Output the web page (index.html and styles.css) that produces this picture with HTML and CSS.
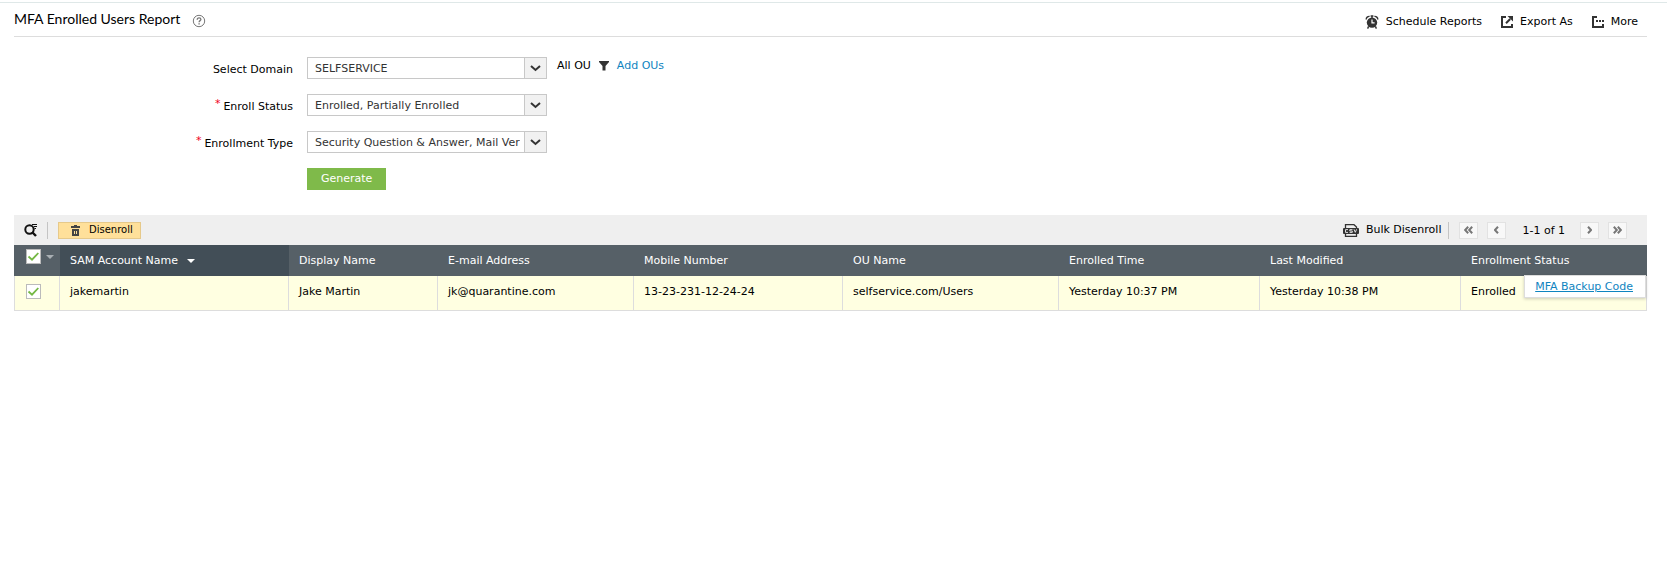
FILE: index.html
```html
<!DOCTYPE html>
<html lang="en">
<head>
<meta charset="utf-8">
<title>MFA Enrolled Users Report</title>
<link rel="stylesheet" href="styles.css">
</head>
<body>
<main class="page">
  <header class="page-header">
    <h1 class="title">MFA Enrolled Users Report</h1>
    <button class="plain help" type="button" aria-label="Help">
      <svg width="14" height="14" viewBox="0 0 14 14" fill="none" stroke="#777" stroke-width="1"><circle cx="7" cy="7" r="5.7"/><path d="M5.2 5.8c0-1.3.8-2 1.9-2s1.8.7 1.8 1.6c0 1.2-1.8 1.3-1.8 2.8" stroke-width="1.3"/><path d="M7.1 9.2v1.4" stroke-width="1.4"/></svg>
    </button>
    <nav class="actions">
      <button class="plain action" type="button">
        <svg width="14" height="14" viewBox="0 0 14 14"><circle cx="7" cy="7.6" r="5.200" fill="#333"/><path d="M1.2 4.4A3 3 0 0 1 4.6 1.4M12.8 4.4A3 3 0 0 0 9.4 1.4" stroke="#333" stroke-width="1.4" fill="none"/><path d="M5.6 1h2.8M7 1v2M3.6 11.4l-1 2.2M10.4 11.4l1 2.2" stroke="#333" stroke-width="1.4"/><path d="M7 4.6v3.3h2.6" stroke="#fff" stroke-width="1.2" fill="none"/></svg>
        Schedule Reports
      </button>
      <button class="plain action" type="button">
        <svg width="12" height="12" viewBox="0 0 12 12" fill="none" stroke="#333"><path d="M5 1H1v10h10V8" stroke-width="2"/><path d="M5 7.2 9.2 3" stroke-width="2"/><path d="M6.500 0H12v5.500z" fill="#333" stroke="none"/></svg>
        Export As
      </button>
      <button class="plain action" type="button">
        <svg width="12" height="12" viewBox="0 0 12 12" fill="none" stroke="#333"><path d="M5 1H1v10h10V8" stroke-width="2"/><path d="M4 5h2M7 5h2M10 5h2" stroke-width="2"/></svg>
        More
      </button>
    </nav>
  </header>

  <form class="filters">
    <label class="field-label" for="domain">Select Domain</label>
    <div class="field">
      <span class="select-box">
        <select id="domain"><option>SELFSERVICE</option></select>
        <span class="arrow"><svg width="11" height="8" viewBox="0 0 11 8"><path d="M1 2 5.500 6 10 2" fill="none" stroke="#333" stroke-width="2"/></svg></span>
      </span>
      <span class="ou">
        <span>All OU</span>
        <svg width="10" height="10" viewBox="0 0 10 10"><path d="M0 0h10v1L6.5 5v4.5h-3V5L0 1z" fill="#333"/></svg>
        <a class="link" href="#">Add OUs</a>
      </span>
    </div>

    <label class="field-label" for="status"><span class="required">*</span>Enroll Status</label>
    <div class="field">
      <span class="select-box">
        <select id="status"><option>Enrolled, Partially Enrolled</option></select>
        <span class="arrow"><svg width="11" height="8" viewBox="0 0 11 8"><path d="M1 2 5.500 6 10 2" fill="none" stroke="#333" stroke-width="2"/></svg></span>
      </span>
    </div>

    <label class="field-label" for="type"><span class="required">*</span>Enrollment Type</label>
    <div class="field">
      <span class="select-box">
        <select id="type"><option>Security Question &amp; Answer, Mail Verification</option></select>
        <span class="arrow"><svg width="11" height="8" viewBox="0 0 11 8"><path d="M1 2 5.500 6 10 2" fill="none" stroke="#333" stroke-width="2"/></svg></span>
      </span>
    </div>

    <button class="generate" type="button">Generate</button>
  </form>

  <section class="report">
    <div class="toolbar">
      <button class="plain search" type="button" aria-label="Search">
        <svg width="14" height="14" viewBox="0 0 14 14" fill="none" stroke="#111"><circle cx="5.500" cy="6.500" r="4.200" stroke-width="2"/><path d="m8 9 4 4" stroke-width="2.400"/><path d="M8 1.500h5M10 3.500h3M10.500 5.500H12" stroke-width="1"/></svg>
      </button>
      <span class="divider"></span>
      <button class="disenroll" type="button">
        <svg width="9" height="11" viewBox="0 0 9 11"><path d="M3 0h3v1h3v2H0V1h3zM1 4h7v7H1z" fill="#444"/><path d="M3.500 6v3M5.500 6v3" stroke="#ffe09a" stroke-width="1"/></svg>
        Disenroll
      </button>
      <button class="plain bulk" type="button">
        <svg width="16" height="13" viewBox="0 0 16 13" fill="none" stroke="#333"><path d="M2.500 4V.7h8.500L13.500 3v1M2.500 10v2.300h11V10" stroke-width="1.300"/><rect x="0" y="4" width="16" height="6" rx="1" fill="#333" stroke="none"/><path d="M5 5.600H2.500v2.800H5M9.500 5.600h-2.700V7h2.500v1.400H6.600M11 5.300l1.300 3 1.300-3" stroke="#efefef" stroke-width=".9"/></svg>
        Bulk Disenroll
      </button>
      <span class="divider"></span>
      <div class="pager">
        <button class="page-btn" type="button" aria-label="First page"><svg width="9" height="8" viewBox="0 0 9 8"><path d="M4.200.8 1.200 4l3 3.200M8.200.8 5.200 4l3 3.200"/></svg></button>
        <button class="page-btn" type="button" aria-label="Previous page"><svg width="5" height="8" viewBox="0 0 5 8"><path d="M4 .8 1 4l3 3.200"/></svg></button>
        <span class="range">1-1 of 1</span>
        <button class="page-btn" type="button" aria-label="Next page"><svg width="5" height="8" viewBox="0 0 5 8"><path d="M1 .8 4 4 1 7.200"/></svg></button>
        <button class="page-btn" type="button" aria-label="Last page"><svg width="9" height="8" viewBox="0 0 9 8"><path d="M.8.800 3.800 4l-3 3.200M4.800.800l3 3.200-3 3.200"/></svg></button>
      </div>
    </div>

    <table class="grid">
      <colgroup>
        <col class="c-check"><col class="c-sam"><col class="c-display"><col class="c-email"><col class="c-mobile"><col class="c-ou"><col class="c-time"><col class="c-time"><col class="c-status">
      </colgroup>
      <thead>
        <tr>
          <th class="check-cell"><span class="check-wrap"><input type="checkbox" checked aria-label="Select all"><svg width="8" height="4" viewBox="0 0 8 4"><path d="M0 0h8L4 4z" fill="#a9afb3"/></svg></span></th>
          <th class="sorted">SAM Account Name <svg class="sort" width="8" height="4" viewBox="0 0 8 4"><path d="M0 0h8L4 4z" fill="#fff"/></svg></th>
          <th>Display Name</th>
          <th>E-mail Address</th>
          <th>Mobile Number</th>
          <th>OU Name</th>
          <th>Enrolled Time</th>
          <th>Last Modified</th>
          <th>Enrollment Status</th>
        </tr>
      </thead>
      <tbody>
        <tr>
          <td class="check-cell"><span class="check-wrap"><input type="checkbox" checked aria-label="Select jakemartin"></span></td>
          <td>jakemartin</td>
          <td>Jake Martin</td>
          <td>jk@quarantine.com</td>
          <td>13-23-231-12-24-24</td>
          <td>selfservice.com/Users</td>
          <td>Yesterday 10:37 PM</td>
          <td>Yesterday 10:38 PM</td>
          <td class="status-cell">Enrolled<span class="popup"><a class="link" href="#">MFA Backup Code</a></span></td>
        </tr>
      </tbody>
    </table>
  </section>
</main>
</body>
</html>
```

FILE: styles.css
```css
* {
  box-sizing: border-box;
}

body {
  margin: 0;
  background: #fff;
  color: #000;
  font: 11px/16px Verdana, "DejaVu Sans", sans-serif;
}

svg {
  display: block;
  flex: none;
}

button,
select {
  font: inherit;
  color: inherit;
}

.plain {
  display: flex;
  align-items: center;
  padding: 0;
  border: 0;
  background: none;
}

.link {
  color: #0f84bf;
  text-decoration: none;
}

.page {
  margin-top: 2px;
  padding: 0 20px 0 14px;
  border-top: 1px solid #dfe8e8;
}

.page-header {
  display: flex;
  align-items: center;
  height: 34px;
  border-bottom: 1px solid #ddd;
}

.title {
  margin: 0 12px 2px 0;
  font: 400 14px/20px Lato, sans-serif;
}

.help {
  margin-top: 2px;
}

.actions {
  display: flex;
  gap: 19px;
  margin: 4px 9px 0 auto;
}

.action {
  gap: 7px;
}

.filters {
  display: grid;
  grid-template-columns: 279px 1fr;
  column-gap: 14px;
  row-gap: 15px;
  padding-top: 20px;
}

.field-label {
  height: 22px;
  padding-top: 4px;
  line-height: 18px;
  text-align: right;
}

.required {
  margin-right: 3px;
  color: #f00020;
  vertical-align: 3px;
  line-height: 1;
}

.field {
  display: flex;
  gap: 10px;
}

.select-box {
  display: grid;
  grid-template-columns: 1fr 23px;
  width: 240px;
  height: 22px;
}

.select-box select {
  grid-area: 1 / 1 / 2 / 3;
  appearance: none;
  min-width: 0;
  padding: 1px 26px 0 7px;
  border: 1px solid #c8c8c8;
  border-radius: 0;
  background: #fff;
  color: #333;
}

.arrow {
  grid-area: 1 / 2;
  display: grid;
  place-items: center;
  border: 1px solid #c8c8c8;
  background: #f1f1f1;
  pointer-events: none;
}

.ou {
  display: flex;
  align-items: center;
  gap: 8px;
  height: 18px;
}

.generate {
  grid-column: 2;
  justify-self: start;
  height: 22px;
  padding: 0 14px;
  border: 0;
  background: #7fba4a;
  color: #fff;
}

.report {
  margin-top: 25px;
}

.toolbar {
  display: flex;
  align-items: center;
  height: 30px;
  padding: 0 20px 0 10px;
  background: #efefef;
}

.divider {
  width: 1px;
  height: 17px;
  background: #c4c4c4;
}

.search {
  margin-right: 9px;
}

.disenroll {
  display: flex;
  align-items: center;
  gap: 9px;
  height: 17px;
  margin-left: 10px;
  padding: 0 7px 0 12px;
  border: 1px solid #e6c98a;
  background: #ffe09a;
  font-size: 10px;
}

.bulk {
  gap: 7px;
  margin: 0 7px 0 auto;
}

.pager {
  display: flex;
  align-items: center;
  gap: 9px;
  margin-left: 10px;
}

.page-btn {
  display: grid;
  place-items: center;
  width: 19px;
  height: 17px;
  padding: 0;
  border: 1px solid #e2e2e2;
  background: #f8f8f8;
}

.page-btn svg {
  fill: none;
  stroke: #777;
  stroke-width: 2;
}

.range {
  padding: 1px 6px 0 7px;
}

.grid {
  width: 100%;
  table-layout: fixed;
  border-spacing: 0;
}

.c-check { width: 46px; }
.c-sam { width: 229px; }
.c-display { width: 149px; }
.c-email { width: 196px; }
.c-mobile { width: 209px; }
.c-ou { width: 216px; }
.c-time { width: 201px; }
.c-status { width: 186px; }

.grid th {
  height: 31px;
  padding: 0 10px;
  background: #566067;
  color: #fff;
  font-weight: 400;
  text-align: left;
  white-space: nowrap;
}

.grid .sorted {
  background: #424e57;
}

.sort {
  display: inline-block;
  margin-left: 5px;
  vertical-align: 1px;
}

.grid td {
  height: 35px;
  padding: 8px 10px 0;
  border-right: 1px solid #ddd;
  border-bottom: 1px solid #ddd;
  background: #ffffe1;
  vertical-align: top;
  white-space: nowrap;
}

.grid .check-cell {
  padding: 4px 0 0 12px;
  vertical-align: top;
}

.grid td.check-cell {
  padding: 8px 0 0 11px;
  border-left: 1px solid #ddd;
}

.check-wrap {
  display: flex;
  align-items: center;
  gap: 5px;
}

.check-wrap input {
  appearance: none;
  width: 15px;
  height: 15px;
  margin: 0;
  border: 1px solid #bbb;
  background: #fff;
}

.check-wrap input:checked {
  background-image: url("data:image/svg+xml,%3Csvg xmlns='http://www.w3.org/2000/svg' viewBox='0 0 13 13'%3E%3Cpath d='M1.500 6.500 5 9.700 11.300 3' fill='none' stroke='%2374b843' stroke-width='1.800'/%3E%3C/svg%3E");
}

.status-cell {
  position: relative;
}

.popup {
  position: absolute;
  top: -1px;
  right: 0;
  padding: 3px 12px 2px 10px;
  border: 1px solid #ddd;
  background: #fff;
  box-shadow: 0 1px 3px rgba(0, 0, 0, 0.2);
}

.popup .link {
  text-decoration: underline;
}
```
